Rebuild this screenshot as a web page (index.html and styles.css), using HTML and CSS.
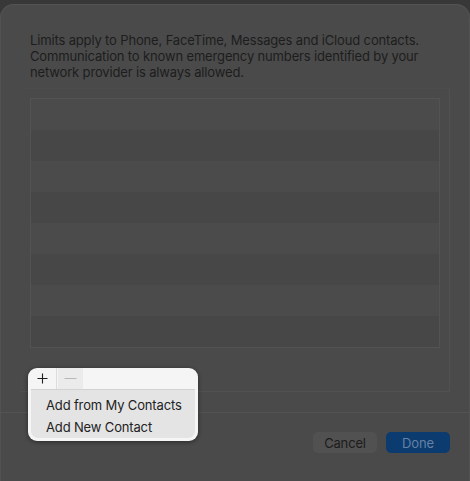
FILE: index.html
```html
<!DOCTYPE html>
<html>
<head>
<meta charset="utf-8">
<link rel="stylesheet" href="styles.css">
</head>
<body>
<div class="sheet">
  <div class="content">
    <p class="note">Limits apply to Phone, FaceTime, Messages and iCloud contacts. Communication to known emergency numbers identified by your network provider is always allowed.</p>
    <div class="group">
      <div class="list">
        <div class="row"></div>
        <div class="row alt"></div>
        <div class="row"></div>
        <div class="row alt"></div>
        <div class="row"></div>
        <div class="row alt"></div>
        <div class="row"></div>
        <div class="row alt"></div>
      </div>
    </div>
  </div>
  <div class="footer">
    <button class="btn cancel">Cancel</button>
    <button class="btn done">Done</button>
  </div>
</div>
<div class="popup">
  <div class="segbar">
    <span class="seg plus"><svg width="11" height="11" viewBox="0 0 11 11"><path d="M5.5 0.5V10.5M0.5 5.5H10.5" stroke="#1e1e1e" stroke-width="1.1" fill="none"/></svg></span>
    <span class="seg minus"><svg width="13" height="3" viewBox="0 0 13 3"><path d="M0.5 1.5H12.5" stroke="#b8b8b8" stroke-width="1" fill="none"/></svg></span>
  </div>
  <div class="menu">
    <div class="item">Add from My Contacts</div>
    <div class="item">Add New Contact</div>
  </div>
</div>
</body>
</html>
```
FILE: styles.css
```css
html, body {
  margin: 0;
  padding: 0;
}
body {
  width: 470px;
  height: 481px;
  overflow: hidden;
  background: #383838;
  font-family: "Inter", "Liberation Sans", sans-serif;
  font-size: 13px;
  letter-spacing: -0.15px;
  position: relative;
}
.sheet {
  margin-top: 4px;
  height: 490px;
  border-radius: 14px;
  background: #4a4a4a;
  box-shadow: inset 0 0 0 1px #525252;
  display: flex;
  flex-direction: column;
}
.content {
  padding: 28px 30px 0 30px;
}
.note {
  margin: 0;
  color: #1d1d1d;
  line-height: 16px;
  width: 400px;
}
.group {
  margin: 8px -10px 0 -10px;
  height: 293px;
  border: 1px solid #515151;
  border-top-color: #4c4c4c;
  border-left-color: #4b4b4b;
  padding: 9px 9px 0 9px;
}
.list {
  border: 1px solid #535353;
  display: flex;
  flex-direction: column;
}
.row {
  height: 31px;
  background: #4b4b4b;
}
.row.alt {
  background: #474747;
}
.footer {
  margin-top: 20px;
  border-top: 1px solid #535353;
  padding: 19px 20px 0 0;
  display: flex;
  justify-content: flex-end;
  gap: 9px;
}
.btn {
  height: 21px;
  border: none;
  border-radius: 5px;
  font-family: inherit;
  font-size: 13px;
  letter-spacing: inherit;
  padding: 0;
  width: 64px;
}
.cancel {
  background: #515151;
  color: #1c1c1c;
}
.done {
  background: #0c3b6f;
  color: #6581a4;
}
.popup {
  position: absolute;
  left: 28px;
  top: 368px;
  width: 170px;
  height: 73px;
  border-radius: 9px;
  background: #f5f5f5;
  box-shadow: 0 1px 4px rgba(0,0,0,0.45);
  display: flex;
  flex-direction: column;
}
.segbar {
  height: 21px;
  display: flex;
  align-items: stretch;
  flex-shrink: 0;
}
.seg {
  display: flex;
  align-items: center;
  justify-content: center;
}
.plus {
  width: 28px;
  border-right: 1px solid #dcdcdc;
  border-top-left-radius: 9px;
}
.minus {
  width: 25px;
  margin-left: 1px;
  background: #ebebeb;
}
.menu {
  margin: 0 3px;
  flex: 1;
  margin-bottom: 3px;
  background: #e4e4e4;
  border-top: 1px solid #d2d2d2;
  border-radius: 0 0 7px 7px;
  padding: 4px 0 0 15px;
  color: #222;
}
.item {
  line-height: 22px;
}
```
